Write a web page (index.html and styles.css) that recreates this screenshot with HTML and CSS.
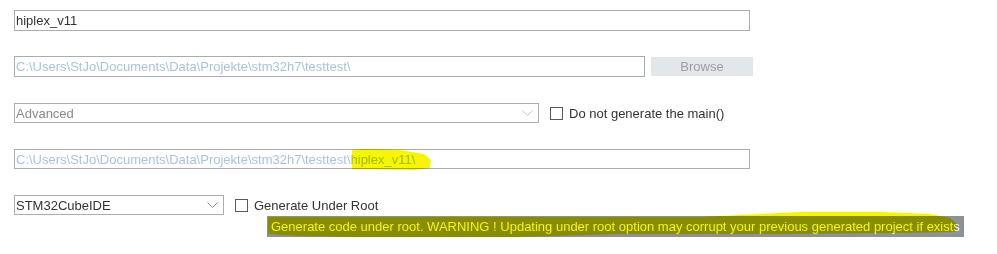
FILE: index.html
```html
<!DOCTYPE html>
<html>
<head>
<meta charset="utf-8">
<link rel="stylesheet" href="styles.css">
</head>
<body>
<div class="form">
  <div class="row r1">
    <div class="field wide dark">hiplex_v11</div>
  </div>
  <div class="row r2">
    <div class="field path">C:\Users\StJo\Documents\Data\Projekte\stm32h7\testtest\</div>
    <div class="btn">Browse</div>
  </div>
  <div class="row r3">
    <div class="select adv">
      <span class="val grey">Advanced</span>
      <svg class="chev" width="11" height="7" viewBox="0 0 11 7"><path d="M0.5 0.5 L5.5 5.5 L10.5 0.5" fill="none" stroke="#c4c7cb" stroke-width="1"/></svg>
    </div>
    <label class="check"><span class="box"></span><span>Do not generate the main()</span></label>
  </div>
  <div class="row r4">
    <div class="field wide light">C:\Users\StJo\Documents\Data\Projekte\stm32h7\testtest\hiplex_v11\</div>
  </div>
  <div class="row r5">
    <div class="select ide">
      <span class="val dark">STM32CubeIDE</span>
      <svg class="chev" width="11" height="7" viewBox="0 0 11 7"><path d="M0.5 0.5 L5.5 5.5 L10.5 0.5" fill="none" stroke="#8a8d91" stroke-width="1"/></svg>
    </div>
    <label class="check"><span class="box"></span><span>Generate Under Root</span></label>
    <div class="tooltip">Generate code under root. WARNING ! Updating under root option may corrupt your previous generated project if exists</div>
  </div>
</div>
<svg class="marker" width="997" height="254" viewBox="0 0 997 254">
  <path d="M352,150 L365,149 L400,150 L424,154 L431,160 L430,168 L415,170 L352,169 Z" fill="#f6f600"/>
  <path d="M268,217 L700,217 L760,214 L800,212 L880,212 L930,214 L950,218 L956,223 L955,232 L900,233 L780,234 L620,234 L520,237 L350,237 L300,236 L268,234 Z" fill="#f6f600"/>
</svg>
</body>
</html>
```
FILE: styles.css
```css
html, body {
  margin: 0;
  padding: 0;
  background: #ffffff;
}
body {
  width: 997px;
  height: 254px;
  position: relative;
  overflow: hidden;
  font-family: "Liberation Sans", Arial, sans-serif;
  font-size: 13px;
}
.form {
  display: flex;
  flex-direction: column;
  padding: 10px 0 0 14px;
}
.row {
  display: flex;
  align-items: center;
  position: relative;
}
.r1 { height: 21px; }
.r2 { height: 21px; margin-top: 25px; }
.r3 { height: 20px; margin-top: 26px; }
.r4 { height: 20px; margin-top: 26px; }
.r5 { height: 20px; margin-top: 26px; }

.field {
  box-sizing: border-box;
  height: 100%;
  border: 1px solid #a9acb0;
  padding: 0 1px;
  display: flex;
  align-items: center;
  white-space: nowrap;
  overflow: hidden;
  background: #fff;
}
.wide { width: 736px; }
.path { width: 631px; color: #a9c3df; }
.dark { color: #333333; }
.light { color: #a9c3df; }
.grey { color: #8a8a8a; }

.btn {
  margin-left: 6px;
  width: 102px;
  height: 19px;
  background: #e4e7ea;
  color: #9b9da0;
  display: flex;
  align-items: center;
  justify-content: center;
  font-size: 13px;
}

.select {
  box-sizing: border-box;
  height: 100%;
  border: 1px solid #a9acb0;
  display: flex;
  align-items: center;
  justify-content: space-between;
  padding: 0 5px 0 1px;
  background: #fff;
}
.adv { width: 525px; }
.ide { width: 210px; }
.chev { display: block; }

.check {
  display: flex;
  align-items: center;
  color: #333333;
  margin-left: 11px;
}
.check .box {
  box-sizing: border-box;
  width: 13px;
  height: 13px;
  border: 1px solid #555a5f;
  background: #fff;
  margin-right: 6px;
}

.tooltip {
  position: absolute;
  left: 253px;
  top: 21px;
  width: 697px;
  height: 21px;
  box-sizing: border-box;
  background: #8d9297;
  color: #ffffff;
  padding-left: 4px;
  display: flex;
  align-items: center;
  white-space: nowrap;
}

.marker {
  position: absolute;
  left: 0;
  top: 0;
  pointer-events: none;
  mix-blend-mode: multiply;
}
```
